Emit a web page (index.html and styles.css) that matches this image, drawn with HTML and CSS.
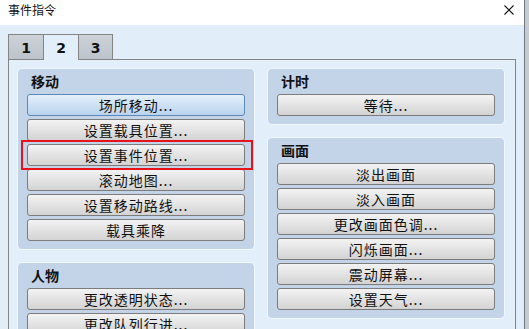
FILE: index.html
```html
<!DOCTYPE html>
<html>
<head>
	<meta charset="utf-8">
	<title>事件指令</title>
	<link rel="stylesheet" href="styles.css">
</head>
<body>
	<div class="window">
		<div class="titlebar">
			<span class="title">事件指令</span>
			<svg class="close" width="10" height="10" viewBox="0 0 10 10">
				<path d="M0.5 0.5 L9.5 9.5 M9.5 0.5 L0.5 9.5" stroke="#111" stroke-width="1.1" fill="none"/>
			</svg>
		</div>
		<div class="content">
			<ul class="tabs">
				<li>1</li>
				<li class="active">2</li>
				<li>3</li>
			</ul>
			<div class="panel">
				<div class="col">
					<div class="group">
						<div class="head">移动</div>
						<button class="btn hot">场所移动...</button>
						<button class="btn">设置载具位置...</button>
						<button class="btn marked">设置事件位置...</button>
						<button class="btn">滚动地图...</button>
						<button class="btn">设置移动路线...</button>
						<button class="btn">载具乘降</button>
					</div>
					<div class="group">
						<div class="head">人物</div>
						<button class="btn">更改透明状态...</button>
						<button class="btn">更改队列行进...</button>
					</div>
				</div>
				<div class="col">
					<div class="group">
						<div class="head">计时</div>
						<button class="btn">等待...</button>
					</div>
					<div class="group">
						<div class="head">画面</div>
						<button class="btn">淡出画面</button>
						<button class="btn">淡入画面</button>
						<button class="btn">更改画面色调...</button>
						<button class="btn">闪烁画面...</button>
						<button class="btn">震动屏幕...</button>
						<button class="btn">设置天气...</button>
					</div>
				</div>
			</div>
		</div>
	</div>
</body>
</html>
```

FILE: styles.css
```css
*{
	margin: 0;
	padding: 0;
	box-sizing: border-box;
}
body{
	background: #c6cbd1;
	font-family: "Noto Sans CJK SC", "Noto Sans", sans-serif;
	color: #111;
	overflow: hidden;
}
ul,li{
	list-style: none;
}
.window{
	width: 525px;
	height: 329px;
	background: #e2edfa;
	border-right: 1px solid #6e7680;
	overflow: hidden;
}
.titlebar{
	height: 25px;
	background: #fff;
	display: flex;
	justify-content: space-between;
	align-items: flex-start;
}
.title{
	font-size: 12px;
	line-height: 20px;
	padding-left: 8px;
}
.close{
	margin-top: 5px;
	margin-right: 10px;
}
.content{
	padding: 9px 0 0 8px;
}
.tabs{
	display: flex;
	height: 26px;
	margin-bottom: -1px;
}
.tabs li{
	width: 35px;
	height: 26px;
	border: 1px solid #848484;
	border-right: none;
	background: linear-gradient(#cdd2d8, #bcc3cb);
	font-family: "DejaVu Sans", sans-serif;
	font-weight: bold;
	font-size: 14px;
	text-align: center;
	line-height: 26px;
}
.tabs li:last-child{
	border-right: 1px solid #848484;
}
.tabs li.active{
	position: relative;
	background: #e3eefb;
	border-bottom: none;
	z-index: 1;
}
.panel{
	width: 508px;
	height: 300px;
	border: 1px solid #848484;
	background: #e3eefb;
	padding: 8px 10px 0 8px;
	display: flex;
	gap: 12px;
}
.col{
	width: 238px;
	display: flex;
	flex-direction: column;
	gap: 12px;
}
.group{
	position: relative;
	border: 1px solid #f2f7fd;
	border-radius: 5px;
	background: #c3d4e9;
	padding: 0 9px 8px 9px;
	display: flex;
	flex-direction: column;
	gap: 3px;
}
.head{
	height: 22px;
	line-height: 25px;
	padding-left: 4px;
	font-size: 14px;
	font-weight: bold;
}
.btn{
	position: relative;
	height: 22px;
	border: 1px solid #7c7c7c;
	border-radius: 3px;
	background: linear-gradient(#f3f3f3, #d3d3d3);
	font-family: "Noto Sans CJK SC", "Noto Sans", sans-serif;
	font-size: 14px;
	letter-spacing: 1px;
	color: #111;
	text-align: center;
	line-height: 20px;
}
.btn.hot{
	border-color: #5b88b6;
	background: linear-gradient(#e3effb, #bad3ee);
}
.btn.marked::after{
	content: "";
	position: absolute;
	top: -5px;
	bottom: -5px;
	left: -7px;
	right: -9px;
	border: 2px solid #e8121b;
	z-index: 2;
}
```
